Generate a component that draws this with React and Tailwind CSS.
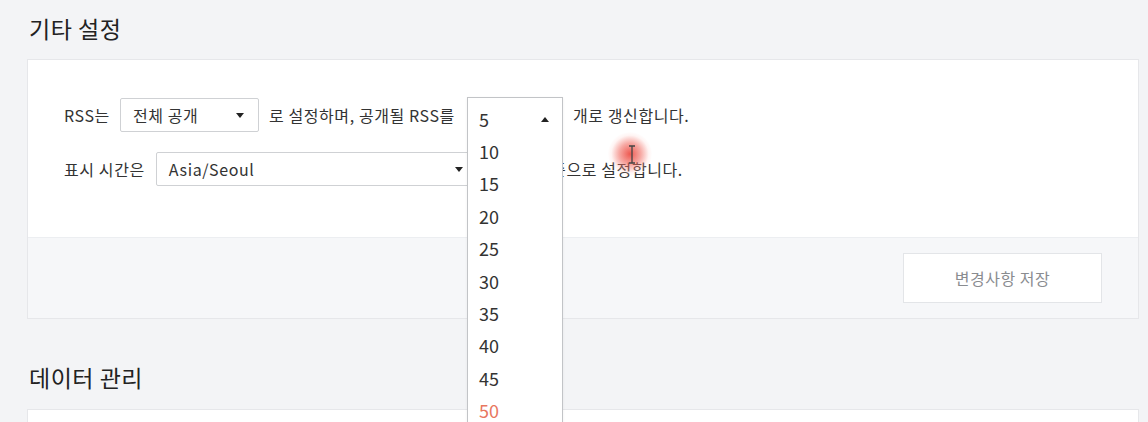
import React from "react";

const font = "font-['Noto_Sans_CJK_KR','Noto_Sans',sans-serif]";

function Caret({ up = false }) {
  return (
    <svg width="8" height="5" viewBox="0 0 8 5" className="shrink-0">
      {up ? <path d="M0 5 L4 0 L8 5 Z" fill="#222" /> : <path d="M0 0 L8 0 L4 5 Z" fill="#222" />}
    </svg>
  );
}

export default function App() {
  const options = ["5", "10", "15", "20", "25", "30", "35", "40", "45", "50"];
  return (
    <div className={`${font} relative w-[1148px] h-[422px] overflow-hidden bg-[#f3f4f6] text-[#333]`}>
      <div className="pl-[27px] pr-[9px]">
        <h2 className="pt-[13px] pl-[2px] text-[23px] tracking-[0.5px] leading-[30px] text-[#222]">기타 설정</h2>
        <div className="mt-[16px] border border-[#e6e7ea] bg-white">
          <div className="h-[177px] pl-[36px] pt-[38px]">
            <div className="flex items-center h-[34px] text-[16px] tracking-[0.6px]">
              <span className="mr-[10px]">RSS는</span>
              <div className="flex items-center justify-between w-[139px] h-[34px] border border-[#cfd1d4] rounded-[2px] pl-[12px] pr-[14px]">
                <span>전체 공개</span>
                <Caret />
              </div>
              <span className="ml-[10px] mr-[12px]">로 설정하며, 공개될 RSS를</span>
              <div className="relative z-10 w-[96px] h-[34px] tracking-normal">
                <div className="absolute left-0 top-[-1px] w-[96px] h-[340px] border border-[#c2c4c7] bg-white pt-[5px] shadow-[0_1px_3px_rgba(0,0,0,0.06)]">
                  {options.map((o, i) => (
                    <div
                      key={o}
                      className={`flex items-center justify-between h-[32.4px] pl-[11px] pr-[13px] text-[18px] ${i === options.length - 1 ? "text-[#e8775f]" : "text-[#333]"}`}
                    >
                      <span>{o}</span>
                      {i === 0 && <Caret up />}
                    </div>
                  ))}
                </div>
              </div>
              <span className="ml-[10px]">개로 갱신합니다.</span>
            </div>
            <div className="flex items-center h-[34px] mt-[20px] text-[16px] tracking-[0.6px]">
              <span className="mr-[11px]">표시 시간은</span>
              <div className="flex items-center justify-between w-[370px] h-[34px] border border-[#cfd1d4] rounded-[2px] pl-[12px] pr-[62px] text-[16px]">
                <span>Asia/Seoul</span>
                <Caret />
              </div>
              <span className="ml-[10px]">기준으로 설정합니다.</span>
            </div>
          </div>
          <div className="h-[81px] border-t border-[#eceef1] bg-[#f6f7f9] flex justify-end items-start pt-[15px] pr-[36px]">
            <button className="w-[199px] h-[50px] bg-white border border-[#e3e5e8] text-[16px] tracking-[0.5px] text-[#8a8c90]">
              변경사항 저장
            </button>
          </div>
        </div>
        <h2 className="mt-[43px] pl-[2px] text-[23px] tracking-[0.5px] leading-[30px] text-[#222]">데이터 관리</h2>
        <div className="mt-[17px] h-[60px] border border-[#e6e7ea] bg-white"></div>
      </div>
      {/* screen-recording cursor highlight */}
      <div className="absolute z-20 left-[608px] top-[132px] w-[44px] h-[44px] rounded-full bg-[radial-gradient(circle,rgba(235,60,50,0.85)_0%,rgba(240,100,90,0.55)_35%,rgba(255,200,195,0.2)_60%,rgba(255,255,255,0)_72%)] pointer-events-none"></div>
      <svg className="absolute z-20 left-[627px] top-[145px] pointer-events-none" width="10" height="19" viewBox="0 0 10 19">
        <path d="M2 1 H8 M5 1 V18 M2 18 H8" stroke="#444" strokeWidth="1.3" fill="none" />
      </svg>
    </div>
  );
}
